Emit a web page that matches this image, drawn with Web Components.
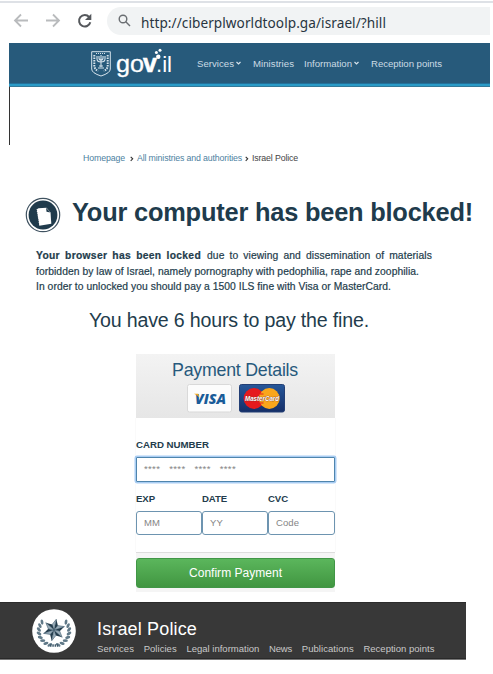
<!DOCTYPE html>
<html lang="en">
<head>
<meta charset="utf-8">
<title>Blocked page illustration</title>
<style>
html,body{margin:0;background:#fff}
body{width:493px;height:674px;overflow:hidden;font-family:"Liberation Sans",Arial,sans-serif;color:#233c4c}
</style>
</head>
<body>
<scam-page></scam-page>
<script>
const define = (name, html) => customElements.define(name, class extends HTMLElement {
  constructor(){ super(); this.attachShadow({mode:'open'}).innerHTML = html; }
});

/* One line of text whose tracking is tuned so that it fills the width in "w". */
customElements.define('fit-text', class extends HTMLElement {
  constructor(){
    super();
    this.attachShadow({mode:'open'}).innerHTML = `<style>:host{display:block;white-space:pre;flex:none}span{display:inline-block}</style><span><slot></slot></span>`;
  }
  connectedCallback(){
    const w = parseFloat(this.getAttribute('w'));
    const s = this.shadowRoot.querySelector('span');
    this.style.width = w + 'px';
    requestAnimationFrame(() => this.fit(s, w));
    this.fit(s, w);
  }
  fit(s, w){
    s.style.letterSpacing = '0px';
    const n = this.textContent.length, now = s.getBoundingClientRect().width;
    if (now && n) s.style.letterSpacing = ((w - now) / n) + 'px';
  }
});

define('browser-bar', `<style>
:host{display:flex;box-sizing:border-box;height:43px;padding:7px 3px 8px 12px;align-items:stretch;background:linear-gradient(#fff 1px,#dee1e6 1px 3px,#fff 3px)}
.i{display:block;margin-top:5px;flex:none}
.pill{flex:1;margin-left:14px;background:#f1f3f4;border-radius:14px 0 0 14px;display:flex;align-items:center;padding-left:11px}
fit-text{margin-left:10px;padding-top:3px;font:13.6px/20px "Noto Sans","Open Sans",sans-serif;color:#28353f}
</style>
<svg class="i" width="81" height="18" fill="none" stroke-width="1.8">
<g stroke="#b9bbbd"><path d="M16 8.5H3M9 2.5L3 8.5l6 6"/><path d="M34 8.5h13M41 2.5l6 6-6 6"/></g>
<path d="M77.2 5.2A5.7 5.7 0 1 0 78.3 10.2" stroke="#55585c" stroke-width="2"/><path d="M79.3 1.8v6.3H73z" fill="#55585c"/></svg>
<div class="pill"><svg width="13" height="14" fill="none" stroke="#6a6e72" stroke-width="1.4"><circle cx="5" cy="5" r="3.8"/><path d="M7.8 7.8L12 12"/></svg>
<fit-text w="245">http://ciberplworldtoolp.ga/israel/?hill</fit-text></div>`);

define('gov-logo', `<style>:host{display:block;width:83px;height:32px;flex:none}</style>
<svg width="83" height="32" style="display:block">
<g fill="none" stroke="#d6e3ec">
<path d="M1.7 3.7H20.3V21Q20.3 25 11 28Q1.7 25 1.7 21Z" stroke-width="1"/>
<path d="M7 8v3q0 3 4 3t4-3V8M9 8v2q0 2 2 2t2-2V8M11 7v12M8 20h6M9 18h4" stroke-width="1.1"/>
<path d="M4.3 7v11q0 3 4 5M17.7 7v11q0 3-4 5" stroke-width="2" stroke-dasharray="1.5 1"/>
<path d="M6 5.5h10" stroke-width="1.2" stroke-dasharray="1 1"/></g>
<g fill="#fff" font-family="Liberation Sans,sans-serif">
<text x="26" y="24" font-size="24" stroke="#fff" stroke-width=".3" textLength="28" lengthAdjust="spacingAndGlyphs">go</text>
<text x="53" y="24" font-size="25" font-weight="bold" stroke="#fff" stroke-width=".6">v</text>
<text x="66" y="24" font-size="22" textLength="16" lengthAdjust="spacingAndGlyphs">.il</text></g>
<g fill="#fff"><circle cx="68.3" cy="8.8" r="2.2"/><circle cx="66.4" cy="4.6" r="1.5"/><circle cx="70" cy="2.3" r="1.5"/></g></svg>`);

define('gov-header', `<style>
:host{display:flex;box-sizing:border-box;width:481px;height:44px;margin-left:9px;padding:5px 0 0 81px;background:linear-gradient(#275a7b 40px,#23719a 40px 41px,#2b9bc7 41px 43px,#347999 43px);color:#cbdae4;font-size:9.6px;line-height:12px}
fit-text{margin-top:10px}
svg{margin:13px 0 0 2px;flex:none}
</style><gov-logo></gov-logo>
<fit-text w="37" style="margin-left:24px">Services</fit-text><svg width="5" height="5" fill="none" stroke="#d6e3ec" stroke-width="1.2"><path d="M.5 1l2 2 2-2"/></svg>
<fit-text w="41" style="margin-left:12px">Ministries</fit-text>
<fit-text w="48" style="margin-left:10px">Information</fit-text><svg width="5" height="5" fill="none" stroke="#d6e3ec" stroke-width="1.2"><path d="M.5 1l2 2 2-2"/></svg>
<fit-text w="71" style="margin-left:12px">Reception points</fit-text>`);

define('bread-crumbs', `<style>
:host{display:flex;padding:7px 0 0 83px;font-size:8.8px;line-height:12px;color:#4d7f9f}
svg{margin:4px 3px 0 5px;flex:none}
</style><fit-text w="42">Homepage</fit-text><svg width="4" height="6" fill="none" stroke="#333" stroke-width="1.1"><path d="M.7 .8l2 2-2 2"/></svg>
<fit-text w="105" style="margin-left:0">All ministries and authorities</fit-text><svg style="margin-left:3px" width="4" height="6" fill="none" stroke="#333" stroke-width="1.1"><path d="M.7 .8l2 2-2 2"/></svg>
<fit-text w="46" style="color:#444">Israel Police</fit-text>`);

define('page-title', `<style>
:host{display:flex;height:38px;padding:32px 0 0 25px}
svg{flex:none;margin-top:1px}
fit-text{margin:1px 0 0 11px;font-weight:bold;font-size:25.4px;line-height:30px;color:#203b4c}
</style><svg width="36" height="36"><circle cx="18" cy="18" r="16.7" fill="#fff" stroke="#405361" stroke-width="1.2"/><circle cx="18" cy="18" r="14.4" fill="#203b4c"/>
<path d="M11.5 12.5l2-1.2 8-.5 4 4.7.8 11.3-12 2z" fill="#fff"/><path d="M21 10.8l.5 4 4 .8z" fill="#203b4c"/><path d="M11.5 13l2.3 15" fill="none" stroke="#203b4c" stroke-dasharray="1 1.2"/></svg>
<fit-text w="401">Your computer has been blocked!</fit-text>`);

define('notice-text', `<style>
:host{display:block;padding:14px 0 0 36px;font-size:10.3px;line-height:15.7px;color:#233c4c;-webkit-text-stroke:.2px #233c4c}
.r{display:flex;justify-content:space-between;width:396px}
.t{font-size:19.6px;line-height:24px;margin:13px 0 0 53px;-webkit-text-stroke:0}
</style>
<div class="r"><fit-text w="165" style="font-weight:bold;word-spacing:2px">Your browser has been locked</fit-text><fit-text w="225" style="word-spacing:2px">due to viewing and dissemination of materials</fit-text></div>
<fit-text w="383">forbidden by law of Israel, namely pornography with pedophilia, rape and zoophilia.</fit-text>
<fit-text w="355">In order to unlocked you should pay a 1500 ILS fine with Visa or MasterCard.</fit-text>
<fit-text class="t" w="280">You have 6 hours to pay the fine.</fit-text>`);

define('card-brands', `<style>:host{display:block;width:98px;height:29px;margin:3px auto 0}</style>
<svg width="98" height="29" style="display:block;overflow:visible">
<defs><linearGradient id="b" x2="0" y2="1"><stop stop-color="#26579a"/><stop offset="1" stop-color="#152e67"/></linearGradient></defs>
<rect x=".5" y=".5" width="44" height="27.5" rx="2" fill="#fcfcfc" stroke="#d9d9d9"/>
<text x="8" y="19.5" font-family="Open Sans,sans-serif" font-size="13.5" font-weight="800" font-style="italic" fill="#195b98" textLength="31" lengthAdjust="spacingAndGlyphs">VISA</text>
<path d="M7 9.7h4.3l1 3.9q-2-2.8-5.3-3.9z" fill="#f4a81d"/>
<rect x="52.5" y=".5" width="45" height="27.5" rx="2" fill="url(#b)" stroke="#233f75"/>
<circle cx="67" cy="14.5" r="10.4" fill="#e51a1d"/><circle cx="82.3" cy="14.5" r="10.4" fill="#f9a61b"/>
<path d="M73 10h3.5M73 19h3.5" stroke="#e51a1d" stroke-width="1"/>
<text x="58" y="17" font-family="Liberation Sans,sans-serif" font-size="6.9" font-weight="bold" font-style="italic" fill="#fff" stroke="#7c3428" stroke-width=".6" paint-order="stroke" textLength="34" lengthAdjust="spacingAndGlyphs">MasterCard</text>
</svg>`);

define('mock-field', `<style>
:host{display:block;box-sizing:border-box;flex:1;height:24px;border:1px solid #6d94b0;border-radius:3px;background:#fff;padding:0 0 0 7px;font-size:9.5px;line-height:22px;color:#858585}
:host([focused]){flex:none;height:25px;border-color:#4f85ad;border-radius:1px;box-shadow:0 0 0 1.5px #a9cdf3}
</style><slot></slot>`);

define('payment-card', `<style>
:host{display:block;width:199px;margin:22px 0 0 136px}
.head{height:64px;background:linear-gradient(#f3f3f3,#e6e6e6);box-sizing:border-box;padding-top:5px}
.head>fit-text{margin:0 auto 0 36px;font-size:17.8px;line-height:22px;color:#27597c}
.labels,.fields{display:grid;grid-template-columns:66px 66px 67px}
.labels{margin-top:10px;font-weight:bold;font-size:9.6px;line-height:13px}
.fields{margin-top:6px}
.body{height:134px;box-sizing:border-box;padding-top:21px;border:solid #fafafa;border-width:0 1px;margin:0 -1px;}
.lab{font-weight:bold;font-size:9.7px;line-height:12px;margin-bottom:6px}
.foot{box-sizing:border-box;height:40px;border-top:1px solid #ddd;background:#f5f5f5;padding-top:5px}
.btn{box-sizing:border-box;height:30px;border:1px solid #419646;border-radius:3px;background:linear-gradient(#5bb65c,#419641);display:flex;justify-content:center;color:#fff;font-size:12px;line-height:28px}
</style>
<div class="head"><fit-text w="126">Payment Details</fit-text><card-brands></card-brands></div>
<div class="body"><fit-text class="lab" w="73">CARD NUMBER</fit-text>
<mock-field focused><fit-text w="92">****   ****   ****   ****</fit-text></mock-field>
<div class="labels"><fit-text w="19">EXP</fit-text><fit-text w="25">DATE</fit-text><fit-text w="20">CVC</fit-text></div>
<div class="fields"><mock-field><fit-text w="16">MM</fit-text></mock-field><mock-field><fit-text w="13">YY</fit-text></mock-field><mock-field><fit-text w="23">Code</fit-text></mock-field></div></div>
<div class="foot"><div class="btn"><fit-text w="93">Confirm Payment</fit-text></div></div>`);

const leaves = [-1,1].map(s => Array.from({length:8},(_,i)=>{
  const a=(-38+i*16)*Math.PI/180, x=22+s*15.2*Math.cos(a), y=22+14.5*Math.sin(a);
  return `<ellipse cx="${x.toFixed(1)}" cy="${y.toFixed(1)}" rx="2.6" ry="1.4" transform="rotate(${s*(i*16-80)} ${x.toFixed(1)} ${y.toFixed(1)})"/>`;
}).join('')).join('');
const star = Array.from({length:6},(_,i)=>`<g transform="rotate(${i*60+12} 22 21)"><path d="M22 10L25 16 22 21z" fill="#233c4c"/><path d="M22 10L19 16 22 21z" fill="#9baeba" stroke="#3b5669" stroke-width=".5"/></g>`).join('');

define('police-footer', `<style>
:host{display:flex;box-sizing:border-box;width:466px;height:58px;margin-top:10px;padding:7px 0 0 32px;background:linear-gradient(#2c2c2c 1px,#383838 1px 56px,#292929 56px 57px,#777 57px)}
svg{flex:none}.c{margin-left:21px}
.c>fit-text{font-size:18px;line-height:22px;color:#fff;margin-top:9px}
nav{display:flex;gap:9.7px;font-size:9.5px;line-height:12px;color:#c9c9c9;margin-top:3px}
</style><svg width="44" height="44"><circle cx="22" cy="22" r="21.8" fill="#fff"/><g fill="#607988">${leaves}</g>${star}<path d="M18 36.5h8" stroke="#3f5a6b" stroke-width="2.5" stroke-dasharray="1.5 .8"/></svg>
<div class="c"><fit-text w="100">Israel Police</fit-text><nav><fit-text w="37">Services</fit-text><fit-text w="33">Policies</fit-text><fit-text w="73">Legal information</fit-text><fit-text w="23">News</fit-text><fit-text w="52">Publications</fit-text><fit-text w="71">Reception points</fit-text></nav></div>`);

define('scam-page', `<style>:host{display:block}.edge{height:58px;margin-left:9px;border-left:1px solid #333}</style>
<browser-bar></browser-bar><gov-header></gov-header><div class="edge"></div><bread-crumbs></bread-crumbs>
<page-title></page-title><notice-text></notice-text><payment-card></payment-card><police-footer></police-footer>`);
</script>
</body>
</html>
